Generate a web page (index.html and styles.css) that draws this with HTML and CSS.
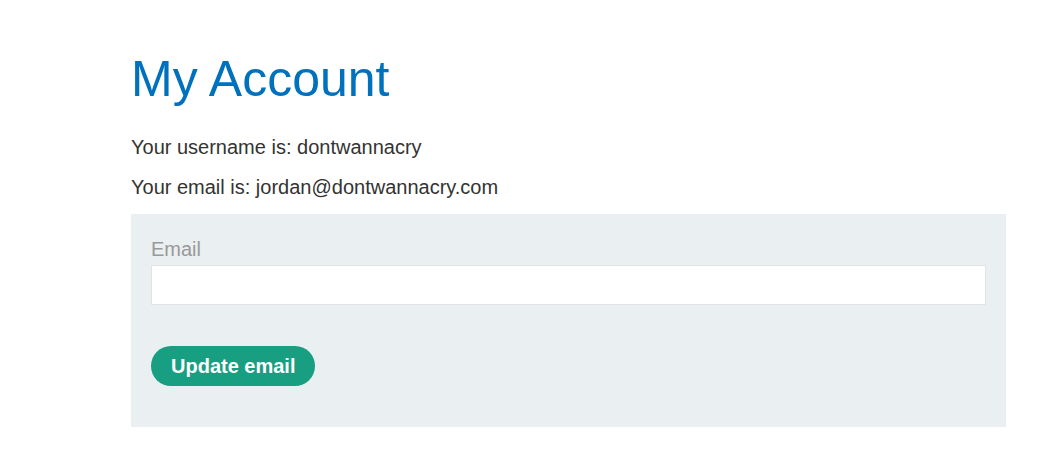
FILE: index.html
```html
<!DOCTYPE html>
<html lang="en">
<head>
    <meta charset="UTF-8">
    <meta name="viewport" content="width=device-width, initial-scale=1.0">
    <title>My Account</title>
    <link rel="stylesheet" href="styles.css">
</head>
<body>
    <div class="account-page">
        <h1>My Account</h1>
        <p class="account-line">Your username is: dontwannacry</p>
        <p class="account-line">Your email is: jordan@dontwannacry.com</p>

        <form class="email-form" onsubmit="return false">
            <label class="form-label" for="email">Email</label>
            <input class="form-input" id="email" type="email" name="email">
            <button class="form-button" type="submit">Update email</button>
        </form>
    </div>
</body>
</html>
```

FILE: styles.css
```css
body {
    margin: 0;
    font-family: "Liberation Sans", Arial, sans-serif;
    color: #333332;
    background: #fff;
}
.account-page {
    padding: 51px 54px 0 131px;
}
h1 {
    margin: 0 0 27px;
    font-size: 50px;
    font-weight: normal;
    line-height: 56px;
    color: #0071bc;
}
.account-line {
    margin: 0 0 14px;
    font-size: 20px;
    line-height: 26px;
}
.email-form {
    display: flex;
    flex-direction: column;
    align-items: flex-start;
    padding: 24px 20px 41px;
    background: #eaeff2;
}
.form-label {
    font-size: 20px;
    line-height: 22px;
    color: #999;
    margin-bottom: 5px;
}
.form-input {
    box-sizing: border-box;
    width: 100%;
    height: 40px;
    margin: 0 0 41px;
    border: 1px solid #e3e3e3;
    background: #fff;
}
.form-button {
    height: 40px;
    padding: 0 20px;
    border: 0;
    border-radius: 20px;
    background: #189e80;
    color: #fff;
    font-family: inherit;
    font-size: 20px;
    font-weight: bold;
    cursor: pointer;
}
```
